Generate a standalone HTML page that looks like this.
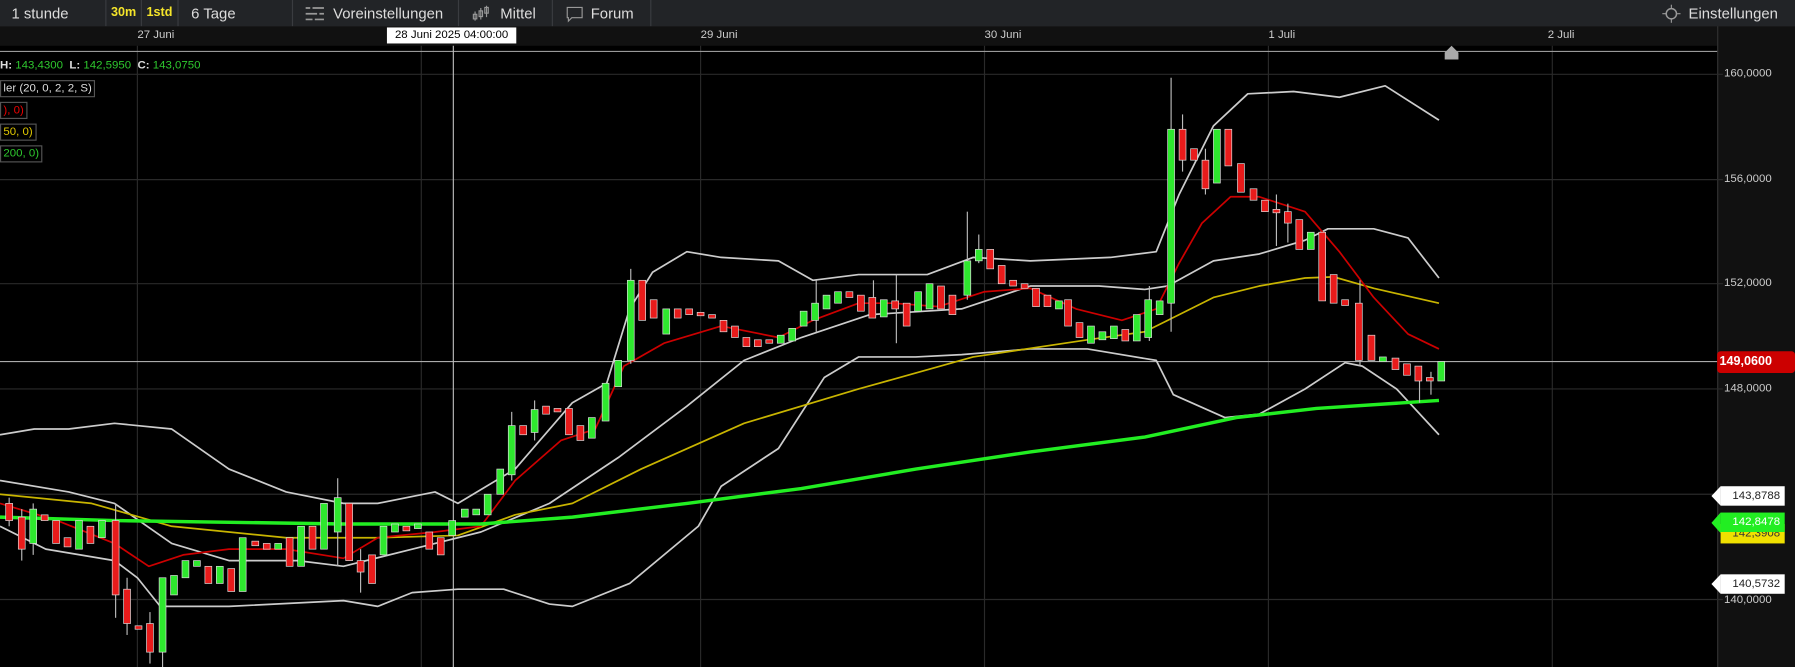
<!DOCTYPE html>
<html><head><meta charset="utf-8"><style>
html,body{margin:0;padding:0;background:#000;overflow:hidden;width:1795px;height:667px}
#w{position:absolute;left:0;top:0;width:1568px;height:583px;transform:scale(1.14477,1.14408);transform-origin:0 0;font-family:"Liberation Sans",sans-serif;background:#000}
.bar{position:absolute;left:0;top:0;width:1568px;height:23px;background:#222427;border-bottom:1px solid #333}
.bar span{position:absolute;top:4px;font-size:13px;color:#ddd}
.sep{position:absolute;top:0;width:1px;height:23px;background:#3a3c40}
.drow{position:absolute;left:0;top:23px;width:1500px;height:17px;background:#111}
.drow span{position:absolute;top:2px;font-size:10px;color:#ccc}
.ax{position:absolute;left:1500px;top:23px;width:68px;height:560px;background:#111;border-left:1px solid #333}
.pl{position:absolute;left:1506px;font-size:10px;color:#ccc}
.tag{position:absolute;left:1503px;width:56px;height:17px;font-size:10px;line-height:17px;text-align:right;padding-right:4px;box-sizing:border-box}
.lg{position:absolute;left:0;font-size:10px;padding:1px 2px;border:1px solid #555;background:#000}
</style></head><body><div id="w">
<div class="bar">
<span style="left:10px">1 stunde</span><div class="sep" style="left:92px"></div>
<span style="left:97px;color:#f5e52a;font-weight:bold;font-size:11px;top:5px">30m</span><div class="sep" style="left:123px"></div>
<span style="left:128px;color:#f5e52a;font-weight:bold;font-size:11px;top:5px">1std</span><div class="sep" style="left:155px"></div>
<span style="left:167px">6 Tage</span><div class="sep" style="left:255px"></div>
<svg style="position:absolute;left:266px;top:5px" width="18" height="14"><g stroke="#999" stroke-width="1.5"><line x1="1" y1="2" x2="17" y2="2"/><line x1="1" y1="7" x2="17" y2="7"/><line x1="1" y1="12" x2="17" y2="12"/></g><g fill="#222427"><rect x="5" y="0" width="2" height="4"/><rect x="11" y="5" width="2" height="4"/><rect x="7" y="10" width="2" height="4"/></g></svg>
<span style="left:291px">Voreinstellungen</span><div class="sep" style="left:400px"></div>
<svg style="position:absolute;left:412px;top:4px" width="18" height="15"><g stroke="#999" fill="none"><line x1="3" y1="6" x2="3" y2="14"/><rect x="1.5" y="8.5" width="3" height="4"/><line x1="8" y1="3" x2="8" y2="13"/><rect x="6.5" y="5.5" width="3" height="5"/><line x1="13" y1="1" x2="13" y2="11"/><rect x="11.5" y="2.5" width="3" height="5"/></g></svg>
<span style="left:437px">Mittel</span><div class="sep" style="left:482px"></div>
<svg style="position:absolute;left:494px;top:5px" width="16" height="15"><path d="M1.5 1.5h13v9h-9l-3 3v-3h-1z" fill="none" stroke="#999"/></svg>
<span style="left:516px">Forum</span><div class="sep" style="left:568px"></div>
<svg style="position:absolute;left:1452px;top:4px" width="16" height="16"><circle cx="8" cy="8" r="4.5" fill="none" stroke="#999" stroke-width="1.3"/><g stroke="#999"><line x1="8" y1="0" x2="8" y2="3"/><line x1="8" y1="13" x2="8" y2="16"/><line x1="0" y1="8" x2="3" y2="8"/><line x1="13" y1="8" x2="16" y2="8"/></g></svg>
<span style="left:1475px">Einstellungen</span>
</div>
<div class="drow">
<span style="left:120px">27 Juni</span><span style="left:612px">29 Juni</span><span style="left:860px">30 Juni</span><span style="left:1108px">1 Juli</span><span style="left:1352px">2 Juli</span>
</div>
<div class="ax"></div>
<svg style="position:absolute;left:0;top:0" width="1568" height="583">
<g stroke="#2a2a2a" stroke-width="1">
<line x1="120" y1="40" x2="120" y2="583"/><line x1="368" y1="40" x2="368" y2="583"/><line x1="612" y1="40" x2="612" y2="583"/><line x1="860" y1="40" x2="860" y2="583"/><line x1="1108" y1="40" x2="1108" y2="583"/><line x1="1356" y1="40" x2="1356" y2="583"/>
<line x1="0" y1="65" x2="1505" y2="65"/><line x1="0" y1="157" x2="1505" y2="157"/><line x1="0" y1="248" x2="1505" y2="248"/><line x1="0" y1="340" x2="1505" y2="340"/><line x1="0" y1="432" x2="1505" y2="432"/><line x1="0" y1="524" x2="1505" y2="524"/>
</g>
<line x1="0" y1="45" x2="1500" y2="45" stroke="#999"/>
<path d="M1262 52v-6l6-6 6 6v6z" fill="#aaa"/>
<line x1="0" y1="316" x2="1500" y2="316" stroke="#aaa"/>
<line x1="396" y1="40" x2="396" y2="583" stroke="#bbb"/>
<g fill="none" stroke-linejoin="round">
<polyline stroke="#ccc" stroke-width="1.5" points="0,380 30,375 60,375 100,370 150,375 200,410 250,430 300,440 330,440 380,430 400,440 450,410 500,352 530,335 550,270 570,238 600,220 630,225 680,228 710,245 750,240 810,240 850,225 900,228 970,225 1010,220 1030,170 1060,110 1090,82 1130,80 1170,85 1210,75 1257,105"/>
<polyline stroke="#ccc" stroke-width="1.5" points="0,420 60,430 100,440 150,475 200,490 260,490 300,495 360,480 420,465 480,440 540,400 600,355 650,315 700,295 760,275 840,270 900,250 960,250 1000,253 1020,250 1060,228 1100,222 1140,210 1160,200 1200,200 1230,208 1257,243"/>
<polyline stroke="#ccc" stroke-width="1.5" points="0,460 40,480 100,490 120,505 140,530 200,530 300,525 330,530 360,518 400,515 440,515 480,528 500,530 550,510 610,460 630,425 680,392 720,330 750,312 800,312 840,310 900,305 950,305 1010,315 1025,345 1070,365 1100,362 1140,340 1175,317 1190,320 1220,340 1257,380"/>
<polyline stroke="#c8b400" stroke-width="1.5" points="0,432 80,440 150,460 250,470 330,470 400,468 450,450 500,440 560,410 650,370 750,340 850,312 950,297 1000,290 1020,280 1060,260 1100,250 1140,243 1165,242 1200,252 1257,265"/>
<polyline stroke="#c00" stroke-width="1.5" points="0,440 50,455 100,475 130,495 160,485 200,480 250,480 300,488 330,470 380,465 420,460 450,420 490,385 520,375 545,320 580,300 630,285 680,295 710,280 750,265 780,265 820,268 860,255 900,252 940,270 980,280 1010,270 1030,230 1050,195 1075,172 1100,172 1140,185 1170,220 1200,260 1230,292 1257,305"/>
<polyline stroke="#22ee22" stroke-width="3" points="0,452 100,455 300,458 420,458 500,452 600,440 700,427 800,410 900,395 1000,382 1080,365 1150,357 1257,350"/>
</g>
<g stroke-width="1" id="c">
<!-- candles: green/red rects with wicks -->
</g>
<g stroke="#bbb">
<line x1="8" y1="435" x2="8" y2="460"/><line x1="19" y1="445" x2="19" y2="490"/><line x1="29" y1="440" x2="29" y2="485"/><line x1="101" y1="440" x2="101" y2="540"/><line x1="111" y1="505" x2="111" y2="555"/><line x1="131" y1="535" x2="131" y2="580"/><line x1="142" y1="510" x2="142" y2="583"/><line x1="295" y1="418" x2="295" y2="495"/><line x1="315" y1="480" x2="315" y2="518"/><line x1="447" y1="360" x2="447" y2="420"/><line x1="467" y1="350" x2="467" y2="385"/><line x1="551" y1="235" x2="551" y2="318"/><line x1="783" y1="240" x2="783" y2="300"/><line x1="845" y1="185" x2="845" y2="262"/><line x1="855" y1="205" x2="855" y2="230"/><line x1="1023" y1="68" x2="1023" y2="290"/><line x1="1033" y1="100" x2="1033" y2="150"/><line x1="1053" y1="130" x2="1053" y2="170"/><line x1="1115" y1="170" x2="1115" y2="215"/><line x1="1125" y1="178" x2="1125" y2="212"/><line x1="1188" y1="245" x2="1188" y2="320"/><line x1="1240" y1="320" x2="1240" y2="352"/><line x1="1250" y1="325" x2="1250" y2="345"/><line x1="1004" y1="250" x2="1004" y2="298"/><line x1="713" y1="245" x2="713" y2="290"/><line x1="763" y1="245" x2="763" y2="275"/>
</g>
<g stroke="#ddd" stroke-width="0.6">
<rect x="5" y="440" width="6" height="15" fill="#e81b1b"/><rect x="16" y="452" width="6" height="28" fill="#e81b1b"/><rect x="26" y="445" width="6" height="30" fill="#2ee82e"/><rect x="36" y="450" width="6" height="5" fill="#e81b1b"/><rect x="46" y="455" width="6" height="20" fill="#e81b1b"/><rect x="56" y="470" width="6" height="8" fill="#e81b1b"/><rect x="66" y="455" width="6" height="25" fill="#2ee82e"/><rect x="76" y="460" width="6" height="15" fill="#e81b1b"/><rect x="86" y="455" width="6" height="15" fill="#2ee82e"/><rect x="98" y="455" width="6" height="65" fill="#e81b1b"/><rect x="108" y="515" width="6" height="30" fill="#e81b1b"/><rect x="118" y="547" width="6" height="3" fill="#e81b1b"/><rect x="128" y="545" width="6" height="25" fill="#e81b1b"/><rect x="139" y="505" width="6" height="65" fill="#2ee82e"/><rect x="149" y="503" width="6" height="17" fill="#2ee82e"/><rect x="159" y="490" width="6" height="15" fill="#2ee82e"/><rect x="169" y="490" width="6" height="5" fill="#2ee82e"/><rect x="179" y="495" width="6" height="15" fill="#e81b1b"/><rect x="189" y="495" width="6" height="15" fill="#2ee82e"/><rect x="199" y="497" width="6" height="20" fill="#e81b1b"/><rect x="209" y="470" width="6" height="47" fill="#2ee82e"/><rect x="220" y="473" width="6" height="4" fill="#e81b1b"/><rect x="230" y="475" width="6" height="5" fill="#e81b1b"/><rect x="240" y="475" width="6" height="5" fill="#2ee82e"/><rect x="250" y="470" width="6" height="25" fill="#e81b1b"/><rect x="260" y="460" width="6" height="35" fill="#2ee82e"/><rect x="270" y="460" width="6" height="20" fill="#e81b1b"/><rect x="280" y="440" width="6" height="40" fill="#2ee82e"/><rect x="292" y="435" width="6" height="30" fill="#2ee82e"/><rect x="302" y="440" width="6" height="50" fill="#e81b1b"/><rect x="312" y="490" width="6" height="10" fill="#e81b1b"/><rect x="322" y="485" width="6" height="25" fill="#e81b1b"/><rect x="332" y="460" width="6" height="25" fill="#2ee82e"/><rect x="342" y="458" width="6" height="7" fill="#2ee82e"/><rect x="352" y="460" width="6" height="4" fill="#e81b1b"/><rect x="362" y="458" width="6" height="4" fill="#2ee82e"/><rect x="372" y="465" width="6" height="15" fill="#e81b1b"/><rect x="382" y="470" width="6" height="15" fill="#e81b1b"/><rect x="392" y="455" width="6" height="13" fill="#2ee82e"/><rect x="403" y="445" width="6" height="7" fill="#2ee82e"/><rect x="413" y="445" width="6" height="5" fill="#2ee82e"/><rect x="423" y="432" width="6" height="18" fill="#2ee82e"/><rect x="434" y="410" width="6" height="22" fill="#2ee82e"/><rect x="444" y="372" width="6" height="43" fill="#2ee82e"/><rect x="454" y="372" width="6" height="8" fill="#e81b1b"/><rect x="464" y="358" width="6" height="20" fill="#2ee82e"/><rect x="474" y="355" width="6" height="7" fill="#e81b1b"/><rect x="484" y="357" width="6" height="3" fill="#e81b1b"/><rect x="494" y="357" width="6" height="23" fill="#e81b1b"/><rect x="504" y="372" width="6" height="13" fill="#e81b1b"/><rect x="514" y="365" width="6" height="18" fill="#2ee82e"/><rect x="526" y="335" width="6" height="33" fill="#2ee82e"/><rect x="537" y="315" width="6" height="23" fill="#2ee82e"/><rect x="548" y="245" width="6" height="70" fill="#2ee82e"/><rect x="558" y="245" width="6" height="35" fill="#e81b1b"/><rect x="568" y="262" width="6" height="16" fill="#e81b1b"/><rect x="579" y="270" width="6" height="22" fill="#2ee82e"/><rect x="589" y="270" width="6" height="8" fill="#e81b1b"/><rect x="599" y="270" width="6" height="5" fill="#e81b1b"/><rect x="609" y="273" width="6" height="3" fill="#e81b1b"/><rect x="619" y="275" width="6" height="3" fill="#e81b1b"/><rect x="629" y="280" width="6" height="10" fill="#e81b1b"/><rect x="639" y="285" width="6" height="10" fill="#e81b1b"/><rect x="649" y="295" width="6" height="8" fill="#e81b1b"/><rect x="659" y="297" width="6" height="6" fill="#e81b1b"/><rect x="669" y="297" width="6" height="3" fill="#e81b1b"/><rect x="679" y="293" width="6" height="7" fill="#2ee82e"/><rect x="689" y="287" width="6" height="11" fill="#2ee82e"/><rect x="699" y="272" width="6" height="13" fill="#2ee82e"/><rect x="709" y="265" width="6" height="15" fill="#2ee82e"/><rect x="719" y="258" width="6" height="12" fill="#2ee82e"/><rect x="729" y="255" width="6" height="10" fill="#2ee82e"/><rect x="739" y="255" width="6" height="5" fill="#e81b1b"/><rect x="749" y="258" width="6" height="14" fill="#e81b1b"/><rect x="759" y="260" width="6" height="18" fill="#e81b1b"/><rect x="769" y="262" width="6" height="15" fill="#2ee82e"/><rect x="779" y="263" width="6" height="7" fill="#e81b1b"/><rect x="789" y="265" width="6" height="20" fill="#e81b1b"/><rect x="799" y="255" width="6" height="17" fill="#2ee82e"/><rect x="809" y="248" width="6" height="22" fill="#2ee82e"/><rect x="819" y="250" width="6" height="20" fill="#e81b1b"/><rect x="829" y="258" width="6" height="17" fill="#e81b1b"/><rect x="842" y="228" width="6" height="30" fill="#2ee82e"/><rect x="852" y="218" width="6" height="10" fill="#2ee82e"/><rect x="862" y="218" width="6" height="17" fill="#e81b1b"/><rect x="872" y="232" width="6" height="16" fill="#e81b1b"/><rect x="882" y="245" width="6" height="5" fill="#e81b1b"/><rect x="892" y="248" width="6" height="4" fill="#e81b1b"/><rect x="902" y="252" width="6" height="16" fill="#e81b1b"/><rect x="912" y="258" width="6" height="10" fill="#e81b1b"/><rect x="922" y="263" width="6" height="7" fill="#2ee82e"/><rect x="930" y="262" width="6" height="23" fill="#e81b1b"/><rect x="940" y="282" width="6" height="13" fill="#e81b1b"/><rect x="950" y="285" width="6" height="15" fill="#2ee82e"/><rect x="960" y="290" width="6" height="7" fill="#2ee82e"/><rect x="970" y="285" width="6" height="11" fill="#2ee82e"/><rect x="980" y="288" width="6" height="10" fill="#e81b1b"/><rect x="990" y="275" width="6" height="23" fill="#2ee82e"/><rect x="1000" y="262" width="6" height="33" fill="#2ee82e"/><rect x="1010" y="263" width="6" height="12" fill="#2ee82e"/><rect x="1020" y="113" width="6" height="152" fill="#2ee82e"/><rect x="1030" y="113" width="6" height="27" fill="#e81b1b"/><rect x="1040" y="130" width="6" height="10" fill="#e81b1b"/><rect x="1050" y="140" width="6" height="25" fill="#e81b1b"/><rect x="1060" y="113" width="6" height="47" fill="#2ee82e"/><rect x="1070" y="113" width="6" height="32" fill="#e81b1b"/><rect x="1081" y="143" width="6" height="25" fill="#e81b1b"/><rect x="1092" y="165" width="6" height="10" fill="#e81b1b"/><rect x="1102" y="175" width="6" height="10" fill="#e81b1b"/><rect x="1112" y="183" width="6" height="3" fill="#e81b1b"/><rect x="1122" y="185" width="6" height="10" fill="#e81b1b"/><rect x="1132" y="192" width="6" height="26" fill="#e81b1b"/><rect x="1142" y="203" width="6" height="15" fill="#2ee82e"/><rect x="1152" y="203" width="6" height="60" fill="#e81b1b"/><rect x="1162" y="240" width="6" height="25" fill="#e81b1b"/><rect x="1172" y="262" width="6" height="5" fill="#e81b1b"/><rect x="1184" y="265" width="6" height="50" fill="#e81b1b"/><rect x="1195" y="293" width="6" height="22" fill="#e81b1b"/><rect x="1205" y="312" width="6" height="4" fill="#2ee82e"/><rect x="1216" y="313" width="6" height="10" fill="#e81b1b"/><rect x="1226" y="318" width="6" height="10" fill="#e81b1b"/><rect x="1236" y="320" width="6" height="13" fill="#e81b1b"/><rect x="1246" y="330" width="6" height="3" fill="#e81b1b"/><rect x="1256" y="316" width="6" height="17" fill="#2ee82e"/>
</g>
</svg>
<div style="position:absolute;left:338px;top:24px;width:113px;height:14px;background:#fff;color:#000;font-size:10px;line-height:14px;text-align:center">28 Juni 2025 04:00:00</div>
<div style="position:absolute;left:0;top:52px;font-size:10px;color:#ddd;font-weight:bold">H: <span style="color:#2ec82e;font-weight:normal">143,4300</span>&nbsp; L: <span style="color:#2ec82e;font-weight:normal">142,5950</span>&nbsp; C: <span style="color:#2ec82e;font-weight:normal">143,0750</span></div>
<div class="lg" style="top:70px;color:#ddd">ler (20, 0, 2, 2, S)</div>
<div class="lg" style="top:89px;color:#e00">), 0)</div>
<div class="lg" style="top:108px;color:#e0c800">50, 0)</div>
<div class="lg" style="top:127px;color:#2ec82e">200, 0)</div>
<div class="pl" style="top:59px">160,0000</div>
<div class="pl" style="top:151px">156,0000</div>
<div class="pl" style="top:242px">152,0000</div>
<div class="pl" style="top:334px">148,0000</div>
<div class="pl" style="top:519px">140,0000</div>
<div style="position:absolute;left:1500px;top:307px;width:68px;height:19px;background:#c00;border-radius:3px;color:#fff;font-size:11px;font-weight:bold;line-height:19px;padding-left:2px;box-sizing:border-box">149,0600</div>
<div class="tag" style="top:458px;background:#f0e000;color:#333">142,3908</div>
<div class="tag" style="top:425px;background:#fff;color:#222">143,8788</div>
<div class="tag" style="top:448px;background:#22ee22;color:#fff">142,8478</div>
<div class="tag" style="top:502px;background:#fff;color:#222">140,5732</div>
<svg style="position:absolute;left:1494px;top:425px" width="10" height="100"><path d="M9 0v17L1 8.5z" fill="#fff"/><path d="M9 23v18L1 32z" fill="#22ee22"/><path d="M9 77v17L1 85.5z" fill="#fff"/></svg>
</div></body></html>
